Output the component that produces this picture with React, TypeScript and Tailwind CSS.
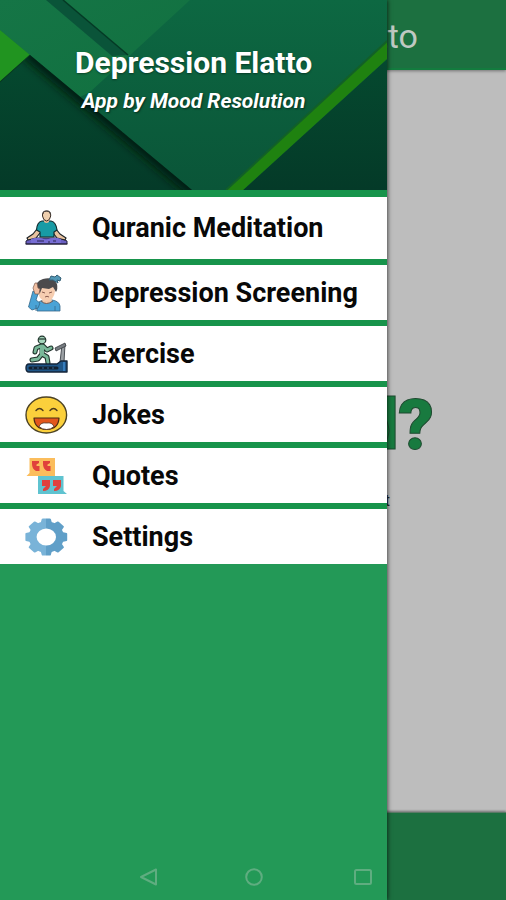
import type { ReactNode } from 'react';

const GEAR_ANGLES = [0, 45, 90, 135, 180, 225, 270, 315];

const iconClass = 'h-10 w-11 shrink-0';

const MeditationIcon = () => (
  <svg viewBox="0 0 44 40" className={iconClass} aria-hidden="true">
    <path
      d="M2 33 L7 30 H37 L43 33 V36 H2 Z"
      fill="#6a60c2"
      stroke="#26223f"
      strokeWidth="1"
      strokeLinejoin="round"
    />
    <path
      d="M13 21 L9 26 L3 30 L4 32 L12 30 L16 25 M32 21 L36 26 L42 30 L41 32 L33 30 L29 25"
      fill="#e9c3a0"
      stroke="#1d2326"
      strokeWidth="1.2"
      strokeLinejoin="round"
    />
    <path
      d="M18 13 Q13 14 12.500 22 L16 24 V29 H30 V24 L33 22 Q32 14 27 13 Z"
      fill="#189ba5"
      stroke="#12292d"
      strokeWidth="1.2"
      strokeLinejoin="round"
    />
    <path d="M20 11 V14 Q22.500 16 25 14 V11 Z" fill="#e2b793" />
    <path
      d="M18.500 8 Q18 3 22.700 3 Q27 3 26.700 8 Q26 12.500 22.700 13 Q19 12.500 18.500 8 Z"
      fill="#efcfae"
      stroke="#3a2f28"
      strokeWidth="1"
    />
    <path d="M19 6 Q19 3 22.700 3 Q26 3 26.500 6" fill="none" stroke="#4a4340" strokeWidth="1.2" />
    <path d="M7 31 Q15 28 22 32 Q30 28 37 31 L37 35 H7 Z" fill="#776dd4" />
    <path d="M13 33 H20 M24 34 H26 M29 33 H32" stroke="#2a2555" strokeWidth="1.2" />
    <path d="M1.500 36 H43.500" stroke="#26223f" strokeWidth="1" />
  </svg>
);

const ScreeningIcon = () => (
  <svg viewBox="0 0 44 40" className={iconClass} aria-hidden="true">
    <path
      d="M13 38 V32 Q14 28 20 27 H28 Q35 28 36 33 V38 Z"
      fill="#4aa3d6"
      stroke="#35688a"
      strokeWidth="0.8"
    />
    <path
      d="M9 18 L14 21 L12 27 L16 30 L14 35 L8 37 L4.500 34 Z"
      fill="#4aa3d6"
      stroke="#35688a"
      strokeWidth="0.8"
    />
    <path d="M19 25 L18 28 Q22 33 28 28 L27 25 Z" fill="#f2c9a9" />
    <path d="M17 28 Q22 33 29 28" fill="none" stroke="#7c5b50" strokeWidth="1" />
    <path d="M14 17 Q14 27 22 28 Q30 28 31 18 L29 12 H16 Z" fill="#f6cdb0" />
    <path
      d="M12 17 Q11 8 19 6 Q29 3 33 11 Q34 16 32 19 L29 14 L25 16 L18 15 L16 20 Z"
      fill="#4b4a4c"
    />
    <path
      d="M11 10 L9 15 L11 21 L15 21 L16 16 L14 15 L13 10 Z"
      fill="#f2c0a3"
      stroke="#7c5b50"
      strokeWidth="0.7"
    />
    <path
      d="M25 7 L27 3 L31 4 L33 2 L37 5 L36 8 L33 7 L34 10 L29 7 Z"
      fill="#5197b5"
      stroke="#345f75"
      strokeWidth="1"
      strokeLinejoin="round"
    />
    <path
      d="M18 19 L21 20 M25 20 L28 19 M21 24 Q23 22.500 25 24"
      fill="none"
      stroke="#8a5d50"
      strokeWidth="1"
    />
    <path d="M12 32 V38 M31 33 V38" stroke="#35688a" strokeWidth="0.8" />
  </svg>
);

const RUNNER_PATH =
  'M18 12 L18 20 M17 12 L12 14 L11 18 M19 12 L23 16 L27 14 M18 20 L14 25 L8 26 M18 20 L23 23 L24 29';

const ExerciseIcon = () => (
  <svg viewBox="0 0 44 40" className={iconClass} aria-hidden="true">
    <path d="M38 11 L36 28 H40 L41 10" fill="#9ba0a4" stroke="#4b5055" strokeWidth="1" />
    <path d="M31 14 L41 9 L42 12 L32 17 Z" fill="#777c81" stroke="#34383c" strokeWidth="0.8" />
    <g fill="none" strokeLinecap="round" strokeLinejoin="round">
      <path d={RUNNER_PATH} stroke="#20342c" strokeWidth="5" />
      <path d={RUNNER_PATH} stroke="#79b899" strokeWidth="2.8" />
      <path d="M18 12.500 V20" stroke="#79b899" strokeWidth="4" />
    </g>
    <circle cx="18" cy="6" r="3.800" fill="#a4d5bb" stroke="#20342c" strokeWidth="1.2" />
    <path d="M14.500 5 H21.500" stroke="#20342c" strokeWidth="1.2" />
    <path
      d="M5 30 H33 L37 27 H43 V38 H5 Q2 38 2 34 Q2 30 5 30 Z"
      fill="#1f5688"
      stroke="#14253a"
      strokeWidth="1.4"
      strokeLinejoin="round"
    />
    <path d="M6 34 H33" stroke="#12202f" strokeWidth="3" strokeLinecap="round" />
    <path
      d="M8 34 H10 M13 34 H15 M18 34 H20 M23 34 H25 M28 34 H30"
      stroke="#34638f"
      strokeWidth="1"
    />
    <path d="M40 28 V37" stroke="#3c86c9" strokeWidth="1.600" />
  </svg>
);

const JokesIcon = () => (
  <svg viewBox="0 0 44 40" className={iconClass} aria-hidden="true">
    <ellipse cx="22.300" cy="20" rx="20.300" ry="18" fill="#fbd03c" stroke="#4d4325" strokeWidth="1.4" />
    <path
      d="M12 15.500 Q15.500 11.500 19 15.500 M26 15.500 Q29.500 11.500 33 15.500"
      fill="none"
      stroke="#4d3b1c"
      strokeWidth="1.4"
      strokeLinecap="round"
    />
    <path
      d="M10 23 H35 Q34.500 34 22.500 34.500 Q10.500 34 10 23 Z"
      fill="#e2571c"
      stroke="#4b2a15"
      strokeWidth="1.2"
      strokeLinejoin="round"
    />
    <path
      d="M15 31.500 Q17 27 22.500 28 Q28 27 30 31.500 Q27 34.500 22.500 34.500 Q18 34.500 15 31.500 Z"
      fill="#ffffff"
      stroke="#4b2a15"
      strokeWidth="0.8"
    />
  </svg>
);

const QuotesIcon = () => (
  <svg viewBox="0 0 44 40" className={iconClass} aria-hidden="true">
    <path d="M5.500 2 H31 V20 H2.500 L5.500 17 Z" fill="#fbbd5c" />
    <path d="M14 20 H39.500 V35 L43 38 H14 Z" fill="#5fc3d0" />
    <g fill="#e0403c">
      <path d="M8 5 H15 V7 L12.500 8.500 V10 H15.500 V15 H12 Q8 13 8 8 Z" />
      <path d="M19 5 H26 V7 L23.500 8.500 V10 H26.500 V15 H23 Q19 13 19 8 Z" />
      <path d="M18 24 H26 V30 Q25 35 19 35 V33 L22 30 H18 Z" />
      <path d="M29 24 H37 V30 Q36 35 30 35 V33 L33 30 H29 Z" />
    </g>
  </svg>
);

const SettingsIcon = () => (
  <svg viewBox="0 0 44 40" className={iconClass} aria-hidden="true">
    <defs>
      <linearGradient id="gearShade" gradientUnits="userSpaceOnUse" x1="1" y1="0" x2="43" y2="0">
        <stop offset="0.500" stopColor="#79b3d8" />
        <stop offset="0.500" stopColor="#609fc8" />
      </linearGradient>
      <mask id="gearMask">
        <g transform="translate(22.300 20) scale(1.130 1)">
          {GEAR_ANGLES.map((angle) => (
            <path
              key={angle}
              d="M-5.500 -12 L-4 -18 Q-3.800 -18.500 -3 -18.500 H3 Q3.800 -18.500 4 -18 L5.500 -12 Z"
              fill="white"
              transform={`rotate(${angle})`}
            />
          ))}
          <circle r="15.600" fill="white" />
          <circle r="8.600" fill="black" />
        </g>
      </mask>
    </defs>
    <rect width="44" height="40" fill="url(#gearShade)" mask="url(#gearMask)" />
  </svg>
);

const MENU_ITEMS: { label: string; icon: ReactNode }[] = [
  { label: 'Quranic Meditation', icon: <MeditationIcon /> },
  { label: 'Depression Screening', icon: <ScreeningIcon /> },
  { label: 'Exercise', icon: <ExerciseIcon /> },
  { label: 'Jokes', icon: <JokesIcon /> },
  { label: 'Quotes', icon: <QuotesIcon /> },
  { label: 'Settings', icon: <SettingsIcon /> },
];

const HeaderArt = () => (
  <svg
    viewBox="0 0 387 190"
    preserveAspectRatio="none"
    className="absolute inset-0 h-full w-full"
    aria-hidden="true"
  >
    <defs>
      <linearGradient id="base" x1="0" y1="0" x2="0" y2="1">
        <stop offset="0" stopColor="#0d6842" />
        <stop offset="1" stopColor="#0a5538" />
      </linearGradient>
      <linearGradient id="dark" x1="0" y1="0" x2="0" y2="1">
        <stop offset="0" stopColor="#05492f" />
        <stop offset="1" stopColor="#043a28" />
      </linearGradient>
      <linearGradient id="band" x1="0" y1="0" x2="1" y2="1">
        <stop offset="0" stopColor="#157546" />
        <stop offset="1" stopColor="#11703f" />
      </linearGradient>
      <filter id="soft" x="-20%" y="-20%" width="140%" height="140%">
        <feGaussianBlur stdDeviation="5" />
      </filter>
      <clipPath id="leftCorner">
        <path d="M0 82 L30 55 L192 190 H0 Z" />
      </clipPath>
    </defs>
    <rect width="387" height="190" fill="url(#base)" />
    <path d="M0 0 H190 L90 92 L80 97 L0 30 Z" fill="url(#band)" />
    <path d="M46 0 H63 L128 55 L112 56 Z" fill="#0a5439" />
    <path d="M63 0 L128 55" stroke="#043a25" strokeWidth="1.5" />
    <path d="M0 82 L30 55 L192 190 H0 Z" fill="url(#dark)" />
    <g clipPath="url(#leftCorner)">
      <path d="M26 52 L196 193" stroke="#001a10" strokeWidth="12" filter="url(#soft)" />
    </g>
    <path d="M0 30 L30 55 L0 82 Z" fill="#219420" />
    <path d="M0 82 L30 55" stroke="#06351f" strokeWidth="1" />
    <path d="M387 59 V190 H243 Z" fill="url(#dark)" />
    <path d="M387 41 V59 L243 190 H226 Z" fill="#1f8210" />
    <path d="M387 41 L226 190" stroke="#126028" strokeWidth="2" />
  </svg>
);

const Drawer = () => (
  <aside className="absolute inset-y-0 left-0 w-[76.5%] bg-[#239957] shadow-[1px_0_4px_rgba(0,0,0,0.6)]">
    <div className="relative h-[190px] overflow-hidden">
      <HeaderArt />
      <div className="relative pt-[45px] text-center text-white">
        <h2 className="text-[30px] leading-9 font-bold [text-shadow:0_1px_2px_rgba(0,0,0,0.4)]">
          Depression Elatto
        </h2>
        <p className="mt-2 text-[21px] leading-6 font-bold italic [text-shadow:1px_1px_2px_rgba(0,0,0,0.5)]">
          App by Mood Resolution
        </p>
      </div>
    </div>
    <nav className="bg-[#17944b] pt-[7px]">
      <ul className="flex flex-col gap-[6px]">
        {MENU_ITEMS.map(({ label, icon }) => (
          <li key={label} className="h-[55px] bg-white first:h-[62px]">
            <button type="button" className="flex h-full w-full items-center gap-6 pl-6 text-left">
              {icon}
              <span className="text-[27px] leading-8 font-bold whitespace-nowrap text-[#080808]">
                {label}
              </span>
            </button>
          </li>
        ))}
      </ul>
    </nav>
  </aside>
);

const SystemBar = () => (
  <div className="absolute inset-x-0 bottom-3 flex justify-center gap-[85px] pl-1 text-[#5fad80]">
    <button type="button" aria-label="Back">
      <svg viewBox="0 0 22 22" className="size-[22px]" fill="none" stroke="currentColor" strokeWidth="2">
        <path d="M19 3.500 V18.500 L4 11 Z" strokeLinejoin="round" />
      </svg>
    </button>
    <button type="button" aria-label="Home">
      <svg viewBox="0 0 22 22" className="size-[22px]" fill="none" stroke="currentColor" strokeWidth="2">
        <circle cx="10" cy="11" r="7.800" />
      </svg>
    </button>
    <button type="button" aria-label="Recent apps">
      <svg viewBox="0 0 22 22" className="size-[22px]" fill="none" stroke="currentColor" strokeWidth="2">
        <rect x="4" y="4" width="16" height="14" rx="1.500" />
      </svg>
    </button>
  </div>
);

const App = () => {
  return (
    <div className="relative flex min-h-screen flex-col overflow-hidden bg-[#bdbdbd] font-['Roboto',sans-serif]">
      {/* Dimmed page under the drawer */}
      <header className="flex h-[70px] items-center justify-end border-b-2 border-[#137b3e] bg-[#1c7040] pt-1 pr-[88px] shadow-[0_1px_3px_rgba(0,0,0,0.4)]">
        <h1 className="text-[34px] leading-10 text-[#bfc9c2]">Elatto</h1>
      </header>
      <main className="flex flex-1 flex-col items-end pt-[315px]">
        <p className="pr-[72px] text-[70px] leading-20 font-black text-[#187a3f] [-webkit-text-stroke:1px_#1f4a30]">
          d?
        </p>
        <p className="pt-6 pr-[116px] text-base leading-6 text-[#222222]">t</p>
      </main>
      <footer className="h-[88px] border-t border-[#5b7a67] bg-[#1c7040] shadow-[0_-1px_2px_rgba(0,0,0,0.4)]" />

      <Drawer />
      <SystemBar />
    </div>
  );
};

export default App;
